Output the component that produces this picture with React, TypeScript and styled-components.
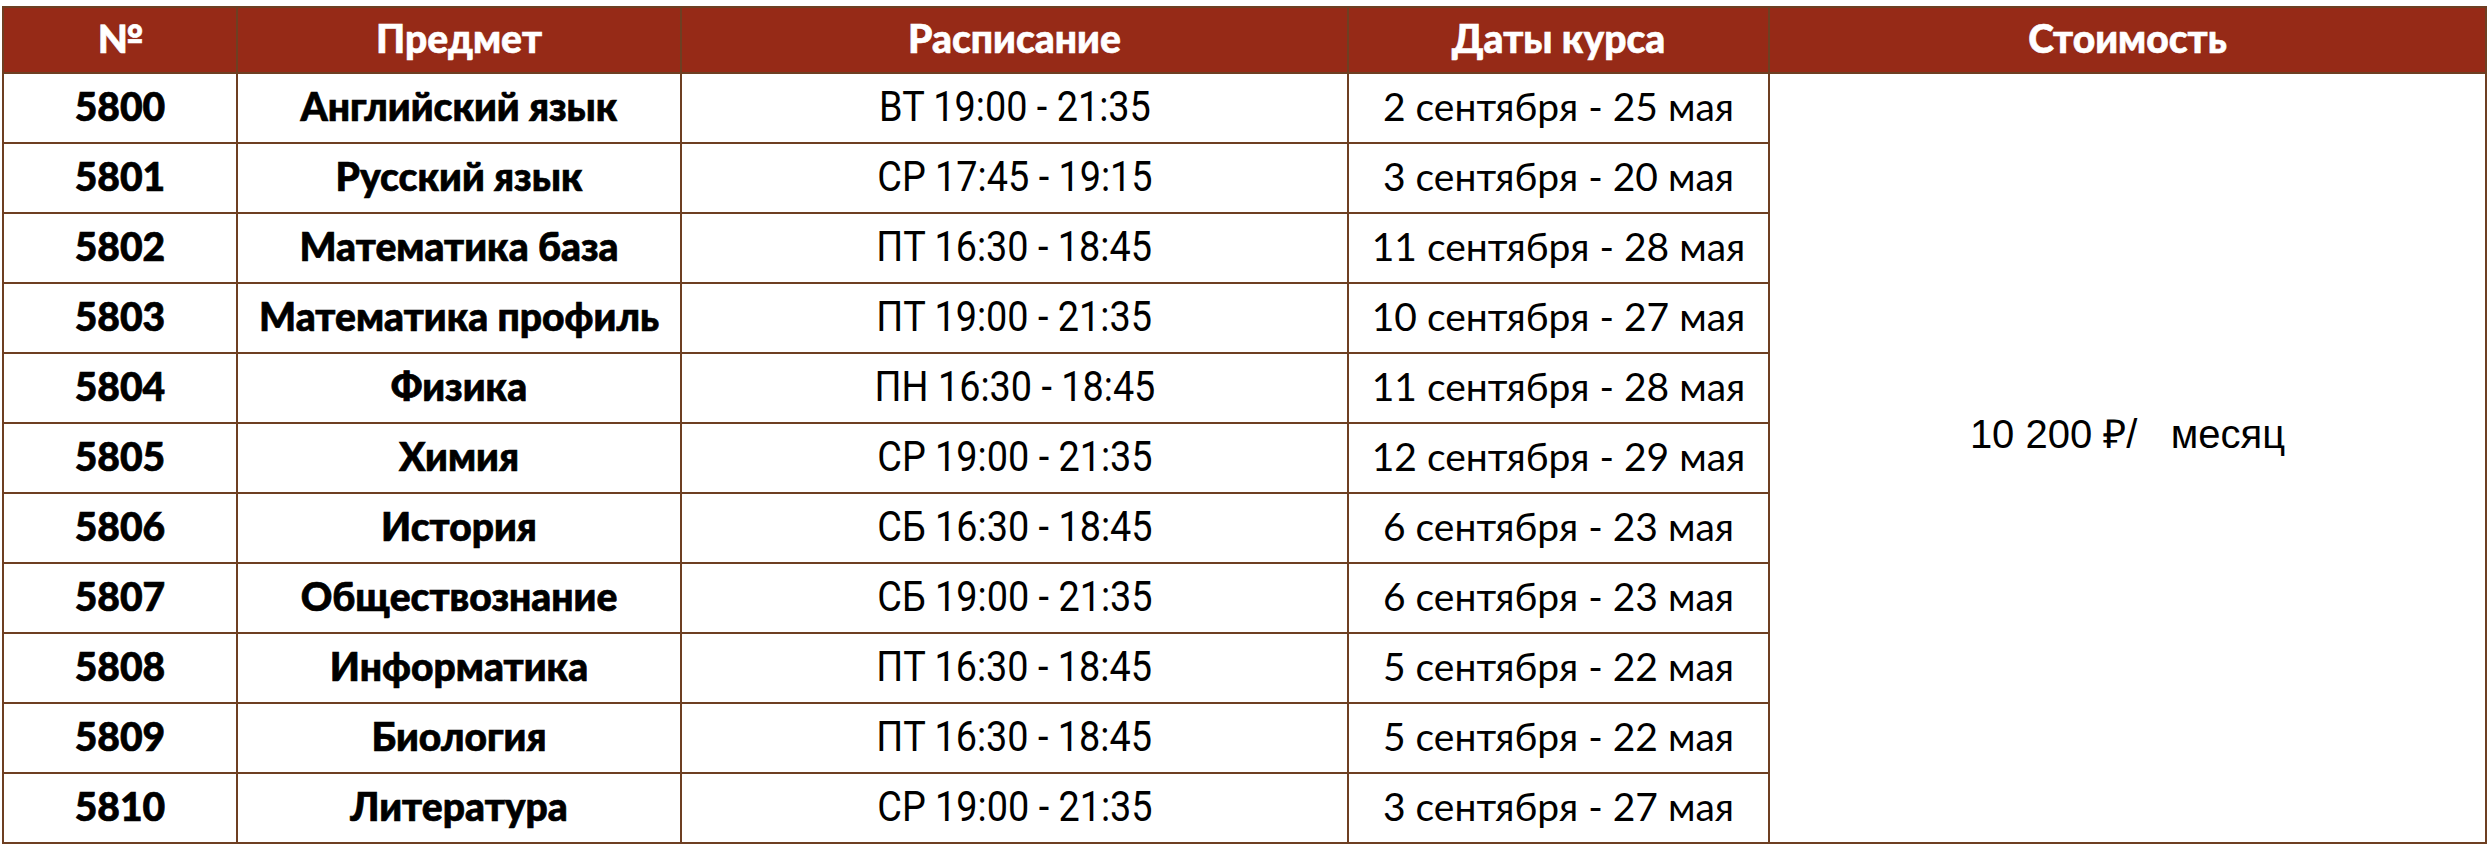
import styled, { createGlobalStyle } from 'styled-components';

const GlobalStyle = createGlobalStyle`
  html, body {
    margin: 0;
    padding: 0;
    background: #ffffff;
  }
  body {
    width: 2491px;
    height: 848px;
    overflow: hidden;
  }
`;

const BORDER = '#6e3f22';
const HEAD_BG = '#962a17';

const Page = styled.div`
  padding: 6px 0 0 2px;
`;

const Table = styled.table`
  border-collapse: collapse;
  table-layout: fixed;
  width: 2483px;
  border: 2px solid ${BORDER};
`;

const HeadRow = styled.tr`
  height: 66px;
`;

const BodyRow = styled.tr`
  height: 70px;
`;

const HeadCell = styled.th`
  background: ${HEAD_BG};
  color: #ffffff;
  border: 2px solid ${BORDER};
  padding: 0 0 4px;
  font-family: Lato, 'Noto Sans', sans-serif;
  font-weight: 900;
  font-size: 39px;
  -webkit-text-stroke: 0.6px #ffffff;
  text-align: center;
  vertical-align: middle;
`;

type Kind = 'num' | 'subject' | 'time' | 'date' | 'price';

const Cell = styled.td<{ $kind: Kind }>`
  border: 2px solid ${BORDER};
  padding: ${(p) => (p.$kind === 'price' ? '0' : '0 0 4px')};
  text-align: center;
  vertical-align: middle;
  color: #000000;
  white-space: nowrap;
  font-family: ${(p) =>
    p.$kind === 'price'
      ? "'Liberation Sans', Arial, sans-serif"
      : p.$kind === 'time'
      ? "Roboto, 'Noto Sans', sans-serif"
      : "Lato, 'Noto Sans', sans-serif"};
  font-weight: ${(p) => (p.$kind === 'num' || p.$kind === 'subject' ? 900 : 400)};
  font-size: ${(p) => (p.$kind === 'price' ? '40px' : p.$kind === 'time' ? '42px' : '39px')};
  line-height: ${(p) => (p.$kind === 'price' ? '48px' : 'normal')};
  -webkit-text-stroke: ${(p) => (p.$kind === 'num' || p.$kind === 'subject' ? '0.7px #000' : '0')};
`;

// the schedule column uses a narrow face; squeeze a regular one to match
const Narrow = styled.span`
  display: inline-block;
  transform: scaleX(0.9);
  transform-origin: center;
`;

const rows = [
  ['5800', 'Английский язык', 'ВТ 19:00 - 21:35', '2 сентября - 25 мая'],
  ['5801', 'Русский язык', 'СР 17:45 - 19:15', '3 сентября - 20 мая'],
  ['5802', 'Математика база', 'ПТ 16:30 - 18:45', '11 сентября - 28 мая'],
  ['5803', 'Математика профиль', 'ПТ 19:00 - 21:35', '10 сентября - 27 мая'],
  ['5804', 'Физика', 'ПН 16:30 - 18:45', '11 сентября - 28 мая'],
  ['5805', 'Химия', 'СР 19:00 - 21:35', '12 сентября - 29 мая'],
  ['5806', 'История', 'СБ 16:30 - 18:45', '6 сентября - 23 мая'],
  ['5807', 'Обществознание', 'СБ 19:00 - 21:35', '6 сентября - 23 мая'],
  ['5808', 'Информатика', 'ПТ 16:30 - 18:45', '5 сентября - 22 мая'],
  ['5809', 'Биология', 'ПТ 16:30 - 18:45', '5 сентября - 22 мая'],
  ['5810', 'Литература', 'СР 19:00 - 21:35', '3 сентября - 27 мая'],
];

export default function App() {
  return (
    <>
      <GlobalStyle />
      <Page>
        <Table>
          <colgroup>
            <col style={{ width: 234 }} />
            <col style={{ width: 444 }} />
            <col style={{ width: 667 }} />
            <col style={{ width: 421 }} />
            <col style={{ width: 717 }} />
          </colgroup>
          <thead>
            <HeadRow>
              <HeadCell>№</HeadCell>
              <HeadCell>Предмет</HeadCell>
              <HeadCell>Расписание</HeadCell>
              <HeadCell>Даты курса</HeadCell>
              <HeadCell>Стоимость</HeadCell>
            </HeadRow>
          </thead>
          <tbody>
            {rows.map(([num, subject, time, dates], i) => (
              <BodyRow key={num}>
                <Cell $kind="num">{num}</Cell>
                <Cell $kind="subject">{subject}</Cell>
                <Cell $kind="time">
                  <Narrow>{time}</Narrow>
                </Cell>
                <Cell $kind="date">{dates}</Cell>
                {i === 0 && (
                  <Cell $kind="price" rowSpan={rows.length}>
                    10 200 ₽/&nbsp;&nbsp; месяц
                    <br />
                    &nbsp;
                  </Cell>
                )}
              </BodyRow>
            ))}
          </tbody>
        </Table>
      </Page>
    </>
  );
}
